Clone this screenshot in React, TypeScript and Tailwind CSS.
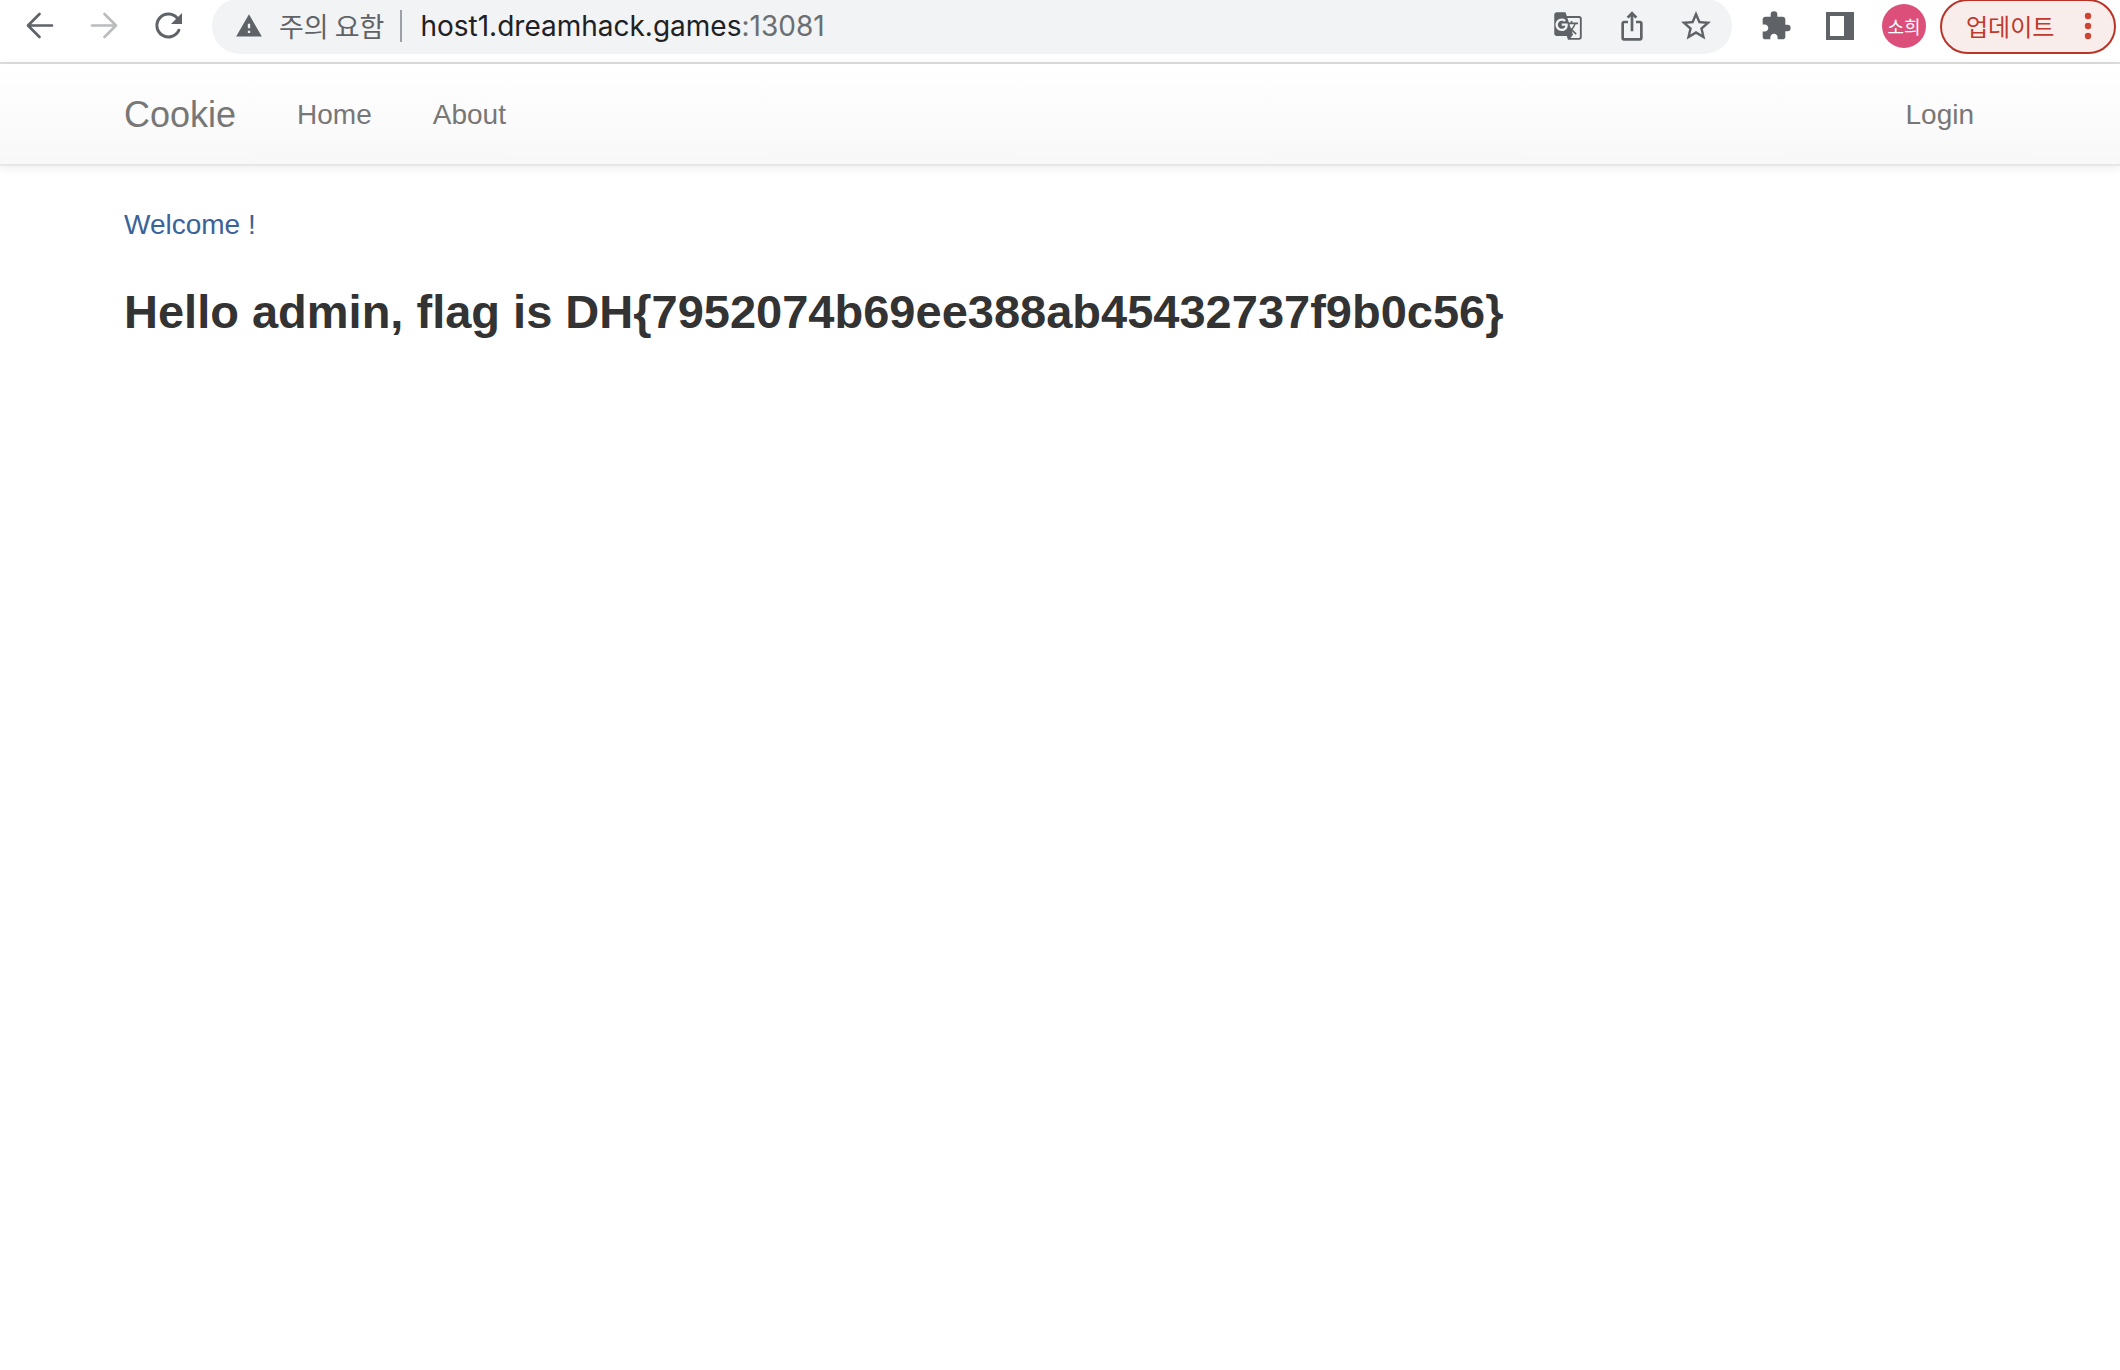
import { MdExtension, MdGTranslate, MdIosShare, MdStarBorder, MdWarning } from "react-icons/md";

const iconButton = "flex size-8 shrink-0 items-center justify-center";

function BrowserToolbar() {
  return (
    <header className="border-b-2 border-[#dcdddd] bg-white text-[#5f6368]">
      <div className="-mt-0.5 mb-2 flex h-14 items-center pr-1 pl-6">
        <button aria-label="Back" className={iconButton}>
          <svg viewBox="0 0 32 32" className="size-8" fill="none" stroke="currentColor" strokeWidth="2.7" strokeLinecap="round" strokeLinejoin="round">
            <path d="M28 15.5H4.5M15.5 4L4 15.5L15.5 27" />
          </svg>
        </button>
        <button aria-label="Forward" className={`${iconButton} ml-8 text-[#babcbe]`}>
          <svg viewBox="0 0 32 32" className="size-8" fill="none" stroke="currentColor" strokeWidth="2.7" strokeLinecap="round" strokeLinejoin="round">
            <path d="M4 15.5H27.5M16.5 4L28 15.5L16.5 27" />
          </svg>
        </button>
        <button aria-label="Reload" className={`${iconButton} ml-8`}>
          <svg viewBox="0 0 32 32" className="size-8">
            <path d="M26.9 20.2A11.5 11.5 0 1 1 25.6 8.6" fill="none" stroke="currentColor" strokeWidth="3" strokeLinecap="round" />
            <path d="M30 3V14H19Z" fill="currentColor" />
          </svg>
        </button>

        <div className="ml-7 flex h-14 min-w-0 flex-1 items-center rounded-full bg-[#f1f3f4] pr-5 pl-[23px]">
          <MdWarning className="size-7 shrink-0" />
          <span className="ml-4 shrink-0 font-['Noto_Sans_CJK_KR',sans-serif] text-[27px] leading-8">주의 요함</span>
          <span className="ml-4 h-8 w-0.5 shrink-0 bg-[#9c9fa3]" />
          <a href="#" className="ml-[18px] font-[Inter,sans-serif] text-[28px] leading-8 text-[#202124]">
            host1.dreamhack.games<span className="text-[#6b6e72]">:13081</span>
          </a>
          <div className="ml-auto flex gap-8">
            <button aria-label="Translate" className={iconButton}>
              <MdGTranslate className="size-[30px]" />
            </button>
            <button aria-label="Share" className={iconButton}>
              <MdIosShare className="size-8" />
            </button>
            <button aria-label="Bookmark" className={iconButton}>
              <MdStarBorder className="size-9 shrink-0" />
            </button>
          </div>
        </div>

        <button aria-label="Extensions" className={`${iconButton} ml-7`}>
          <MdExtension className="size-8" />
        </button>
        <button aria-label="Side panel" className={`${iconButton} ml-8`}>
          <svg viewBox="0 0 28 28" className="size-7">
            <path d="M0 0H28V28H0ZM4 4V24H18V4Z" fill="currentColor" fillRule="evenodd" />
          </svg>
        </button>
        <button className="ml-[26px] size-11 shrink-0 rounded-full bg-[#dc4f7b] font-['Noto_Sans_CJK_KR',sans-serif] text-[18px] text-white">
          소희
        </button>
        <button className="ml-3.5 flex h-[55px] w-44 shrink-0 items-center justify-between self-end rounded-full border-2 border-[#b93327] bg-[#f9edec] pr-[23px] pb-0.5 pl-6 font-['Noto_Sans_CJK_KR',sans-serif] text-[24px] leading-8 text-[#c0392b]">
          업데이트
          <svg viewBox="0 0 6 28" className="h-7 w-1.5 overflow-visible" fill="#cf4332">
            <circle cx="3" cy="4" r="3.2" />
            <circle cx="3" cy="14" r="3.2" />
            <circle cx="3" cy="24" r="3.2" />
          </svg>
        </button>
      </div>
    </header>
  );
}

export default function App() {
  return (
    <div className="min-h-screen bg-white font-['Liberation_Sans',Arial,sans-serif] text-[28px] leading-10 text-[#333333]">
      <BrowserToolbar />
      <nav className="flex h-[102px] items-center gap-[61px] border-b-2 border-[#e7e7e7] bg-linear-to-b from-white to-[#f8f8f8] pt-0.5 pr-[146px] pl-[124px] text-[#777777] shadow-[0_2px_10px_rgba(0,0,0,0.075)]">
        <a href="#" className="text-[36px]">Cookie</a>
        <a href="#home">Home</a>
        <a href="#about">About</a>
        <a href="#login" className="ml-auto">Login</a>
      </nav>
      <main className="px-[124px] pt-[39px]">
        <p className="text-[#3b6399]">Welcome !</p>
        <h1 className="mt-[39px] text-[47px] leading-[56px] font-bold">
          Hello admin, flag is DH&#123;7952074b69ee388ab45432737f9b0c56&#125;
        </h1>
      </main>
    </div>
  );
}
